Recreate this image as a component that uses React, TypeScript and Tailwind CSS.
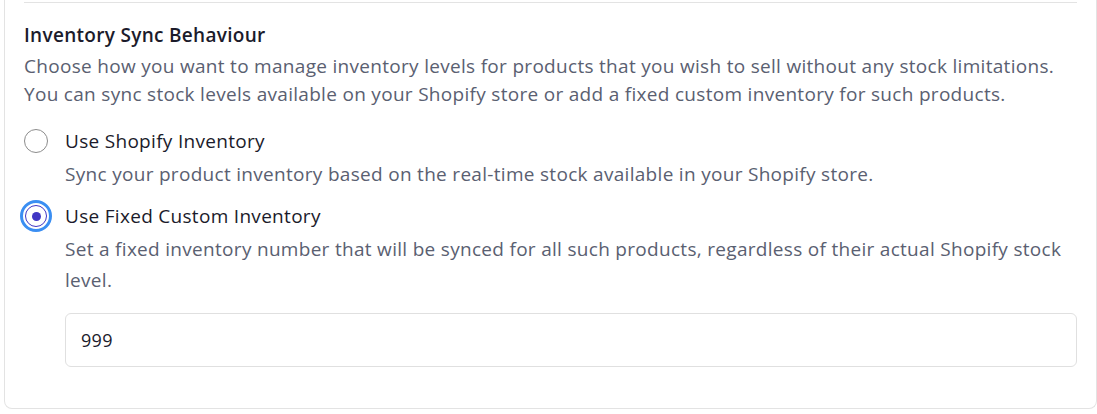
import React, { useState } from "react";

const font = { fontFamily: '"Open Sans", "Liberation Sans", sans-serif' };

function Radio({ checked, onClick }: { checked: boolean; onClick: () => void }) {
  if (checked) {
    return (
      <button
        onClick={onClick}
        className="flex h-[32px] w-[32px] shrink-0 items-center justify-center rounded-full border-[3px] border-[#3a8ef2] bg-white"
        aria-label="selected"
      >
        <span className="flex h-[22px] w-[22px] items-center justify-center rounded-full border border-[#4036c4]">
          <span className="h-[9px] w-[9px] rounded-full bg-[#4036c4]" />
        </span>
      </button>
    );
  }
  return (
    <button
      onClick={onClick}
      className="mx-[4px] h-[24px] w-[24px] shrink-0 rounded-full border border-[#8c8c8c] bg-white"
      aria-label="select"
    />
  );
}

export default function App() {
  const [mode, setMode] = useState<"shopify" | "fixed">("fixed");
  const [qty, setQty] = useState("999");

  return (
    <div className="min-h-screen bg-white text-[19px] tracking-[0.3px]" style={font}>
      <div className="ml-[4px] w-[1093px] rounded-b-lg border border-t-0 border-[#e3e3e3] px-[19px] pb-[41px] pt-[2px]">
        <div className="h-px bg-[#e3e3e3]" />
        <h2 className="mt-[18px] text-[19px] font-semibold leading-[28px] text-[#1b1b2b]">
          Inventory Sync Behaviour
        </h2>
        <p className="mt-[3px] leading-[28px] text-[#5a6071]">
          Choose how you want to manage inventory levels for products that you wish to sell without any stock limitations.
          <br />
          You can sync stock levels available on your Shopify store or add a fixed custom inventory for such products.
        </p>

        <div className="mt-[19px] flex flex-col">
          <div className="-ml-[4px] flex items-center gap-[13px]">
            <Radio checked={mode === "shopify"} onClick={() => setMode("shopify")} />
            <span className="leading-[28px] text-[#1b1b2b]">Use Shopify Inventory</span>
          </div>
          <p className="ml-[41px] mt-[5px] leading-[28px] text-[#5a6071]">
            Sync your product inventory based on the real-time stock available in your Shopify store.
          </p>

          <div className="-ml-[4px] mt-[12px] flex items-center gap-[13px]">
            <Radio checked={mode === "fixed"} onClick={() => setMode("fixed")} />
            <span className="leading-[28px] text-[#1b1b2b]">Use Fixed Custom Inventory</span>
          </div>
          <p className="ml-[41px] mt-[2px] leading-[31px] text-[#5a6071]">
            Set a fixed inventory number that will be synced for all such products, regardless of their actual Shopify stock
            level.
          </p>

          <input
            value={qty}
            onChange={e => setQty(e.target.value)}
            className="ml-[41px] mt-[17px] h-[54px] rounded-md border border-[#e0e0e0] px-[15px] text-[18px] text-[#1b1b2b] outline-none"
          />
        </div>
      </div>
    </div>
  );
}
